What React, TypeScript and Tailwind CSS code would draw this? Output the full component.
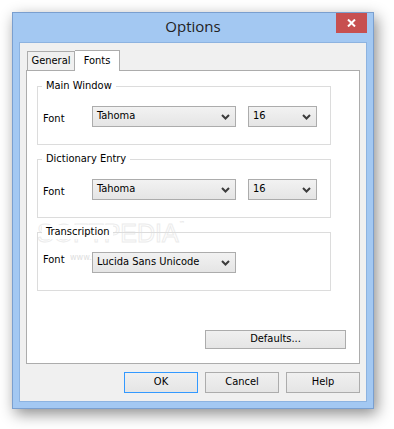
import React from "react";

const Chevron = () => (
  <svg width="9" height="6" viewBox="0 0 9 6" className="shrink-0">
    <polyline points="1,1 4.5,4.5 8,1" fill="none" stroke="#3c3c3c" strokeWidth="2" />
  </svg>
);

function Combo({ value, w }: { value: string; w: string }) {
  return (
    <div
      className={`${w} h-[21px] border border-[#acacac] bg-gradient-to-b from-[#f2f2f2] to-[#e5e5e5] flex items-center justify-between pl-[4px] pr-[5px] text-[11px] text-black`}
    >
      <span>{value}</span>
      <Chevron />
    </div>
  );
}

function Group({ title, children }: { title: string; children: React.ReactNode }) {
  return (
    <div className="relative h-[59px] border border-[#dcdcdc]">
      <span className="absolute left-[4px] top-[-8px] px-[4px] leading-[14px] text-[11px] text-black bg-white">
        {title}
      </span>
      <div className="flex items-center h-full pt-[2px]">{children}</div>
    </div>
  );
}

function Btn({ label, w, primary }: { label: string; w: string; primary?: boolean }) {
  return (
    <div
      className={`${w} flex items-center justify-center border ${
        primary ? "border-[#3399ff]" : "border-[#acacac]"
      } bg-gradient-to-b from-[#f0f0f0] to-[#e5e5e5] text-[11px] text-black`}
    >
      {label}
    </div>
  );
}

export default function App() {
  return (
    <div
      className="w-[394px] h-[429px] bg-white pl-[12px] pt-[12px]"
      style={{ fontFamily: '"DejaVu Sans Condensed", "DejaVu Sans", sans-serif' }}
    >
      <div className="w-[362px] h-[397px] border border-[#7a9fcf] bg-[#a3c8f2] flex flex-col px-[6px] pb-[6px] shadow-[3px_5px_14px_rgba(0,0,0,0.45)]">
        {/* title bar */}
        <div className="relative h-[29px] flex items-center justify-center shrink-0">
          <span
            className="text-[15px] text-[#222] pb-[2px]"
            style={{ fontFamily: '"Open Sans", "Noto Sans", sans-serif' }}
          >
            Options
          </span>
          <div className="absolute right-0 top-0 w-[31px] h-[20px] bg-[#c75050] flex items-center justify-center">
            <svg width="9" height="8" viewBox="0 0 9 8">
              <path d="M1 0.5 L8 7.5 M8 0.5 L1 7.5" stroke="#fff" strokeWidth="2" />
            </svg>
          </div>
        </div>
        {/* client */}
        <div className="flex-1 border border-[#8db3e0] bg-[#f0f0f0] flex flex-col px-[6px] pt-[7px]">
          {/* tabs */}
          <div className="flex items-end h-[20px] pl-[1px] relative z-10">
            <div className="w-[48px] h-[19px] border border-[#acacac] border-b-0 bg-[#f0f0f0] flex items-center justify-center text-[11px] text-black pt-[1px]">
              General
            </div>
            <div className="w-[45px] h-[21px] border border-[#acacac] border-b-0 border-l-0 bg-white flex items-start justify-center pt-[2px] text-[11px] text-black mb-[-1px]">
              Fonts
            </div>
          </div>
          {/* panel */}
          <div className="h-[294px] border border-[#acacac] bg-white flex flex-col px-[10px] pt-[15px] relative">
            {/* watermark (behind content) */}
            <div className="absolute left-[10px] top-[150px] pointer-events-none select-none flex items-start">
              <span
                className="text-[25px] leading-none text-white [-webkit-text-stroke:1px_#ececec]"
                style={{ fontFamily: '"Liberation Sans", sans-serif' }}
              >
                SOFTPEDIA
              </span>
              <span className="text-[7px] text-[#e2e2e2] leading-none">™</span>
            </div>
            <div className="absolute left-[43px] top-[182px] text-[9px] leading-none text-[#e0e0e0] pointer-events-none">
              www.softpedia.com
            </div>
            <div className="w-[294px] flex flex-col gap-[14px] relative">
              <Group title="Main Window">
                <span className="w-[54px] pl-[5px] text-[11px] text-black pt-[5px]">Font</span>
                <Combo value="Tahoma" w="w-[144px]" />
                <div className="w-[12px]" />
                <Combo value="16" w="w-[69px]" />
              </Group>
              <Group title="Dictionary Entry">
                <span className="w-[54px] pl-[5px] text-[11px] text-black pt-[5px]">Font</span>
                <Combo value="Tahoma" w="w-[144px]" />
                <div className="w-[12px]" />
                <Combo value="16" w="w-[69px]" />
              </Group>
              <Group title="Transcription">
                <span className="w-[54px] pl-[5px] text-[11px] text-black pb-[5px]">Font</span>
                <Combo value="Lucida Sans Unicode" w="w-[144px]" />
              </Group>
            </div>
            <div className="flex-1" />
            <div className="flex justify-end pr-[3px] pb-[14px]">
              <Btn label="Defaults..." w="w-[141px] h-[19px]" />
            </div>
          </div>
          {/* bottom buttons */}
          <div className="flex justify-end gap-[7px] pt-[8px]">
            <Btn label="OK" w="w-[74px] h-[21px]" primary />
            <Btn label="Cancel" w="w-[74px] h-[21px]" />
            <Btn label="Help" w="w-[74px] h-[21px]" />
          </div>
        </div>
      </div>
    </div>
  );
}
